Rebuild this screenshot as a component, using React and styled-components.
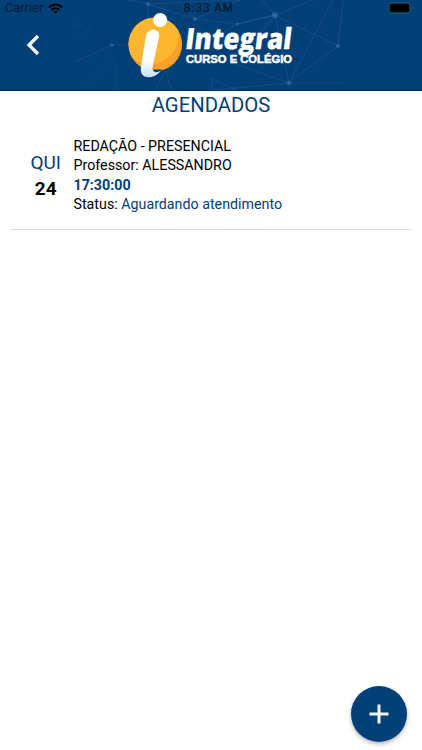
import React from "react";
import styled, { createGlobalStyle } from "styled-components";

const GlobalStyle = createGlobalStyle`
  * {
    box-sizing: border-box;
  }
  body {
    margin: 0;
    background: #fff;
    font-family: Roboto, "Liberation Sans", sans-serif;
  }
`;

const Screen = styled.div`
  display: flex;
  flex-direction: column;
  height: 750px;
  overflow: hidden;
  color: #000;
`;

const Header = styled.header`
  position: relative;
  flex: none;
  height: 91px;
  background: #034078;
  border-bottom: 1px solid #02305f;
`;

const Network = styled.svg`
  position: absolute;
  top: 0;
  left: 0;
`;

const StatusBar = styled.div`
  position: relative;
  z-index: 1;
  display: grid;
  grid-template-columns: 1fr auto 1fr;
  align-items: center;
  height: 16px;
  padding: 0 8px 0 5px;
  font-family: Inter, sans-serif;
  font-size: 11.3px;
  color: #04192c;
`;

const Carrier = styled.div`
  display: flex;
  align-items: center;
  gap: 5px;
  letter-spacing: 0.2px;
`;

const Clock = styled.div`
  padding-right: 2px;
  font-weight: 500;
  letter-spacing: 0.55px;
`;

const Battery = styled.svg`
  justify-self: end;
  margin-top: -1px;
`;

const NavBar = styled.div`
  position: relative;
  display: flex;
  align-items: flex-start;
  height: 74px;
  margin-top: -4px;
`;

const Back = styled.button`
  width: 128px;
  height: 66px;
  padding: 0 0 0 26px;
  border: 0;
  background: none;
  text-align: left;
  line-height: 0;
`;

const LogoImage = styled.svg`
  overflow: visible;
`;

const Main = styled.main`
  flex: 1;
`;

const Title = styled.h1`
  margin: 0;
  font-size: 20.3px;
  font-weight: 400;
  line-height: 28px;
  text-align: center;
  color: #034078;
`;

const Item = styled.div`
  display: flex;
  align-items: center;
  height: 111px;
  margin: 0 11px;
  padding-top: 3px;
  border-bottom: 1px solid #dcdcdc;
`;

const Day = styled.div`
  width: 62.5px;
  padding-left: 7px;
  text-align: center;
  font-size: 19px;
  line-height: 26px;
`;

const Weekday = styled.div`
  color: #034078;
`;

const Date = styled.div`
  font-weight: 700;
`;

const Info = styled.div`
  font-size: 14.25px;
  line-height: 19.4px;
`;

const Blue = styled.span`
  color: #034078;
  font-weight: ${p => (p.$bold ? 700 : 400)};
`;

const AddButton = styled.button`
  position: absolute;
  left: 351px;
  top: 686px;
  display: flex;
  align-items: center;
  justify-content: center;
  width: 56px;
  height: 56px;
  padding: 0;
  border: 0;
  border-radius: 50%;
  background: #034078;
  box-shadow: 0 2px 4px rgba(0, 0, 0, 0.3);
`;

const items = [
  {
    weekday: "QUI",
    day: "24",
    subject: "REDAÇÃO - PRESENCIAL",
    teacher: "ALESSANDRO",
    time: "17:30:00",
    status: "Aguardando atendimento"
  }
];

const nodes = [
  [112, 45, 1.8],
  [148, 4, 2],
  [195, 19, 2],
  [237, 24, 1.5],
  [275, 15, 3],
  [289, 83, 2.3],
  [338, 46, 2]
];

const Logo = () => (
  <LogoImage width="168" height="74" viewBox="128 12 168 74">
    <defs>
      <linearGradient id="stem" x1="0" y1="0" x2="0" y2="1">
        <stop offset="0.65" stopColor="#fff" />
        <stop offset="1" stopColor="#c5e2f5" />
      </linearGradient>
      <clipPath id="disc">
        <circle cx="155.3" cy="44.3" r="26.8" />
      </clipPath>
    </defs>
    <circle cx="155.3" cy="44.3" r="26.8" fill="#f7a129" />
    <circle cx="150" cy="35" r="29" fill="#fdb62f" clipPath="url(#disc)" />
    <path d="M152 69.5h9.500l-2.500 3-6 1.500z" fill="#034078" />
    <path
      d="M146 35.500c2.500-8.500 15-7 13 1.500l-6.300 29c-1.200 6 3.500 8 8.300 4.500-3 4-7.500 6.800-12.500 6.800-6 0-8.800-4.500-7.300-11.800z"
      fill="url(#stem)"
    />
    <circle cx="160.2" cy="20" r="7" fill="#fff" />
    <text
      x="184.5"
      y="49"
      transform="translate(0 49) skewX(-7) translate(0 -49)"
      textLength="106"
      lengthAdjust="spacingAndGlyphs"
      fontFamily="Open Sans"
      fontWeight="800"
      fontSize="29"
      fill="#fff"
      stroke="#fff"
      strokeWidth="0.3"
    >
      Integral
    </text>
    <text
      x="186"
      y="63.4"
      textLength="106"
      lengthAdjust="spacingAndGlyphs"
      fontFamily="Liberation Sans"
      fontWeight="700"
      fontSize="10.8"
      fill="#fff"
      stroke="#fff"
      strokeWidth="0.5"
    >
      CURSO E COLÉGIO
    </text>
  </LogoImage>
);

export default function App() {
  return (
    <Screen>
      <GlobalStyle />
      <Header>
        <Network width="422" height="90" stroke="#5d8fc0" strokeOpacity="0.19" fill="none">
          <path d="M75 62 112 45H148V4" />
          <path d="M73 23 90 30 75 35M86 88 115 58V90" strokeOpacity="0.1" />
          <path d="M148 4 195 19 237 24 275 15 338 46 292 80M148 4 128 0M148 4 240 0M195 19 178 0M195 19 240 0M275 15 262 0M275 15 313 0M275 15 237 24 195 50M275 15 289 83M275 15 240 60M289 83 333 0M338 46 343 0M289 83 230 62M289 83H344M289 83 212 90V79L240 91M165 70 172 91M165 70 155 91" />
          {nodes.map(([x, y, r]) => (
            <circle key={x} cx={x} cy={y} r={r} fill="#4c7bab" fillOpacity="0.5" stroke="none" />
          ))}
        </Network>
        <StatusBar>
          <Carrier>
            Carrier
            <svg width="15" height="11" viewBox="0 0 15 11" fill="none" stroke="#000" strokeWidth="2">
              <path d="M1 4.2a9.3 9.3 0 0 1 13 0M3.6 6.8a5.6 5.6 0 0 1 7.8 0" />
              <path d="M5.4 8.7a3 3 0 0 1 4.2 0L7.5 11z" fill="#000" stroke="none" />
            </svg>
          </Carrier>
          <Clock>8:33 AM</Clock>
          <Battery width="26" height="12" viewBox="0 0 26 12">
            <rect x="1" y="1" width="21" height="10" rx="2.5" fill="#000" stroke="#22667f" />
            <path d="M24 4.2q1.6 1.8 0 3.6z" fill="#22667f" />
          </Battery>
        </StatusBar>
        <NavBar>
          <Back aria-label="Voltar">
            <svg width="14" height="22" viewBox="0 0 14 22">
              <path d="M12 2 3 11l9 9" fill="none" stroke="#fff" strokeWidth="3.2" />
            </svg>
          </Back>
          <Logo />
        </NavBar>
      </Header>
      <Main>
        <Title>AGENDADOS</Title>
        {items.map(e => (
          <Item key={e.day}>
            <Day>
              <Weekday>{e.weekday}</Weekday>
              <Date>{e.day}</Date>
            </Day>
            <Info>
              <div>{e.subject}</div>
              <div>Professor: {e.teacher}</div>
              <Blue $bold>{e.time}</Blue>
              <div>
                Status: <Blue>{e.status}</Blue>
              </div>
            </Info>
          </Item>
        ))}
      </Main>
      <AddButton aria-label="Adicionar">
        <svg width="20" height="20" viewBox="0 0 20 20">
          <path d="M10 0.5v19M0.5 10h19" stroke="#f0f4f8" strokeWidth="3" />
        </svg>
      </AddButton>
    </Screen>
  );
}
